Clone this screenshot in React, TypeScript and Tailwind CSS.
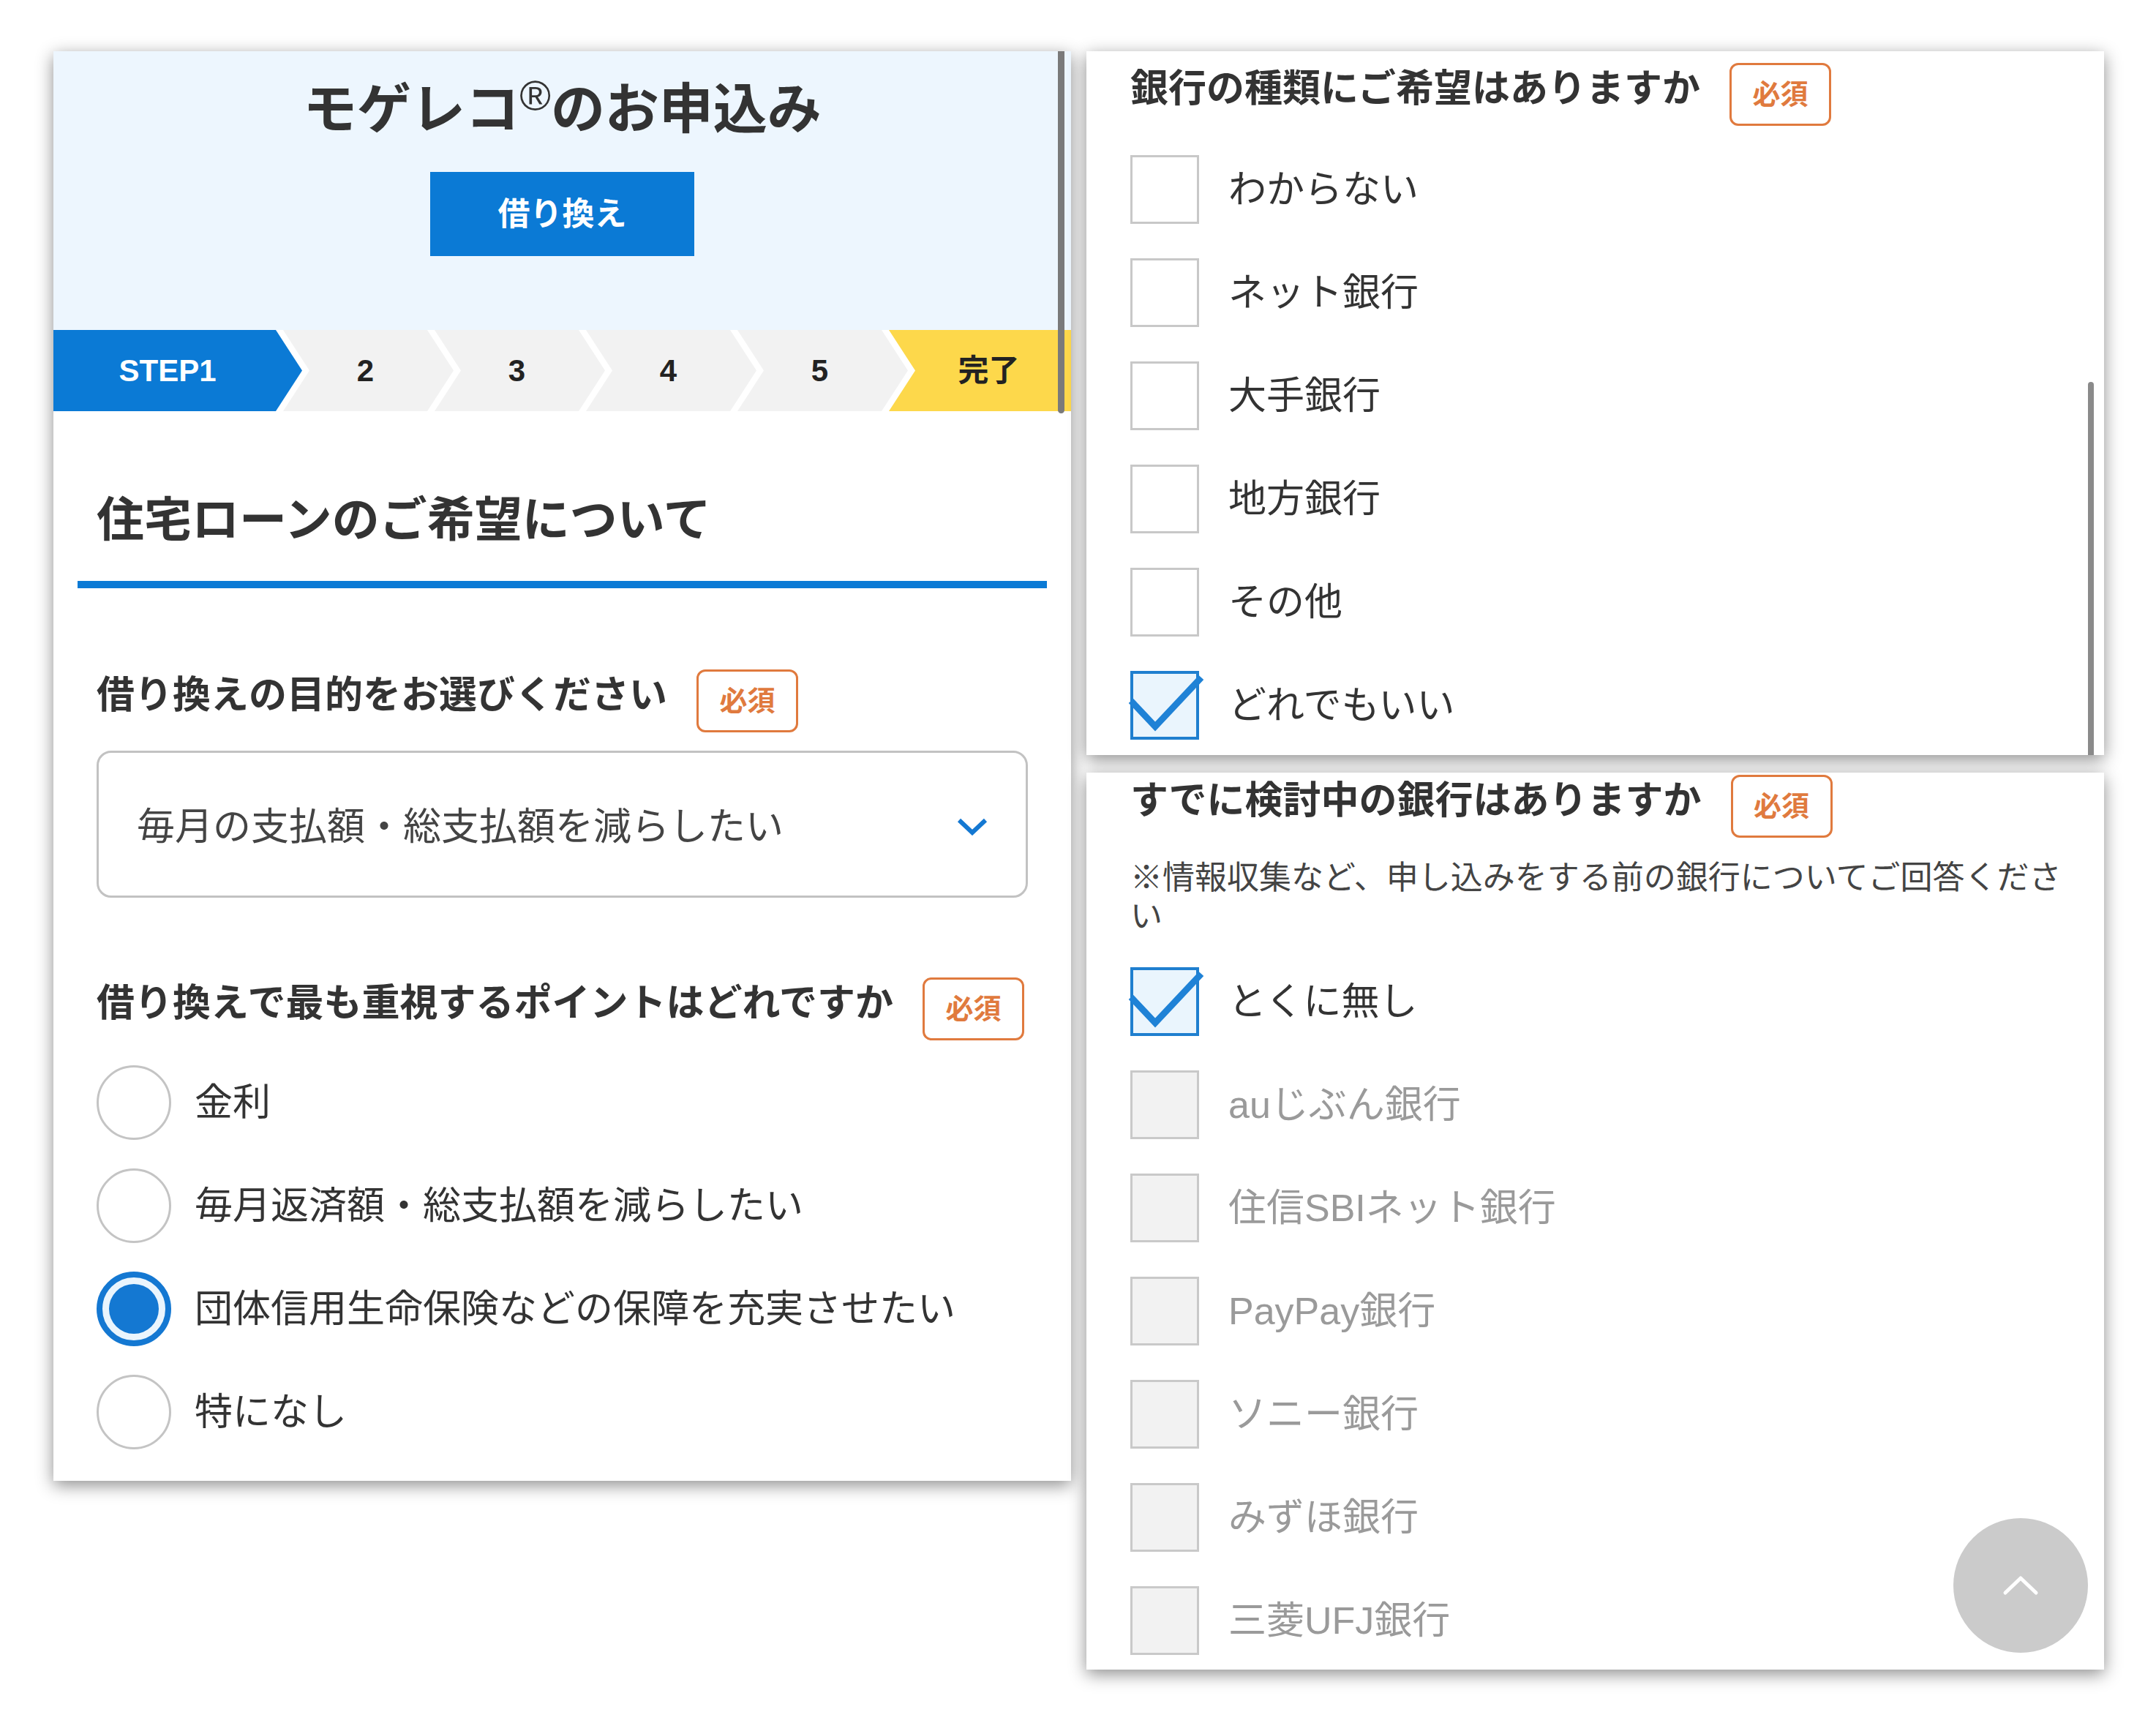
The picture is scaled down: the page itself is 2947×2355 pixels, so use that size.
import React from "react";

const blue = "bg-[#0b7ad5]";

function Badge() {
    return (
        <span className="ml-[40px] flex h-[86px] w-[139px] shrink-0 items-center justify-center rounded-[12px] border-[3px] border-[#e07a3e] text-[38px] font-bold leading-none text-[#e07a3e]">
            必須
        </span>
    );
}

function Question({ children }: { children: React.ReactNode }) {
    return (
        <div className="flex items-start">
            <h3 className="whitespace-nowrap text-[52px] font-bold leading-[70px] text-[#333]">{children}</h3>
            <Badge />
        </div>
    );
}

function Radio({ label, checked }: { label: string; checked?: boolean }) {
    return (
        <div className="flex h-[141px] items-center">
            {checked ? (
                <span className="flex h-[102px] w-[102px] shrink-0 items-center justify-center rounded-full border-[8px] border-[#1478d2] bg-[#eaf5fd]">
                    <span className="h-[68px] w-[68px] rounded-full bg-[#1478d2]" />
                </span>
            ) : (
                <span className="h-[102px] w-[102px] shrink-0 rounded-full border-[3px] border-[#c4c4c4] bg-white" />
            )}
            <span className="ml-[32px] text-[52px] leading-none text-[#333]">{label}</span>
        </div>
    );
}

function Check({ label, checked, disabled }: { label: string; checked?: boolean; disabled?: boolean }) {
    let box = "border-[3px] border-[#c8c8c8] bg-white";
    if (checked) box = "border-[4px] border-[#1f7fcf] bg-[#eaf5fd]";
    if (disabled) box = "border-[3px] border-[#c9c9c9] bg-[#f2f2f2]";
    return (
        <div className="flex h-[141px] items-center">
            <span className={`relative h-[94px] w-[94px] shrink-0 ${box}`}>
                {checked && (
                    <svg viewBox="0 0 94 94" className="absolute left-[-4px] top-[-4px] h-[94px] w-[94px] overflow-visible">
                        <polyline points="1,41 34,76 97,9" fill="none" stroke="#1f82d6" strokeWidth="9" />
                    </svg>
                )}
            </span>
            <span className={`ml-[40px] text-[52px] leading-none ${disabled ? "text-[#9a9a9a]" : "text-[#333]"}`}>{label}</span>
        </div>
    );
}

function StepBar() {
    return (
        <div className="flex h-[111px] bg-white">
            <div className={`flex w-[340px] shrink-0 items-center justify-center pl-[8px] pr-[36px] ${blue} [clip-path:polygon(0_0,304px_0,340px_50%,304px_100%,0_100%)]`}>
                <span className="font-['Liberation_Sans',sans-serif] text-[42px] font-bold text-white">STEP1</span>
            </div>
            {["2", "3", "4", "5"].map((n) => (
                <div
                    key={n}
                    className="-ml-[26px] flex w-[233px] shrink-0 items-center justify-center bg-[#f2f2f2] pr-[8px] [clip-path:polygon(0_0,197px_0,233px_50%,197px_100%,0_100%,36px_50%)]"
                >
                    <span className="font-['Liberation_Sans',sans-serif] text-[42px] font-bold text-[#222]">{n}</span>
                </div>
            ))}
            <div className="-ml-[26px] flex flex-1 items-center justify-center bg-[#fdd84b] pl-[24px] [clip-path:polygon(0_0,100%_0,100%_100%,0_100%,36px_50%)]">
                <span className="text-[42px] font-bold text-[#222]">完了</span>
            </div>
        </div>
    );
}

export default function App() {
    const panel = "relative w-[1391px] shrink-0 overflow-hidden bg-white shadow-[0_6px_22px_rgba(0,0,0,0.45)]";

    return (
        <div className="flex h-[2355px] w-[2947px] items-start gap-[21px] bg-white pl-[73px] pt-[70px] font-['Liberation_Sans','Noto_Sans_CJK_JP',sans-serif]">
            {/* left: step 1 form */}
            <div className={`${panel} h-[1954px]`}>
                <div className="flex h-[381px] flex-col items-center bg-[#edf6fe] pt-[35px]">
                    <h1 className="text-[74px] font-bold leading-[90px] text-[#333]">
                        モゲレコ<span className="align-top text-[58px] font-normal leading-[52px]">®</span>のお申込み
                    </h1>
                    <div className={`mt-[40px] flex h-[115px] w-[361px] items-center justify-center ${blue} text-[44px] font-bold text-white`}>
                        借り換え
                    </div>
                </div>
                <StepBar />

                <div className="px-[33px]">
                    <h2 className="mt-[109px] pl-[26px] text-[65px] font-bold leading-[80px] text-[#333]">住宅ローンのご希望について</h2>
                    <div className={`mt-[43px] h-[10px] ${blue}`} />
                </div>

                <div className="px-[59px]">
                    <div className="mt-[111px]">
                        <Question>借り換えの目的をお選びください</Question>
                    </div>
                    <div className="mt-[25px] flex h-[201px] items-center justify-between rounded-[20px] border-[3px] border-[#c2c2c2] pl-[52px] pr-[52px] pt-[6px]">
                        <span className="text-[52px] leading-none text-[#444]">毎月の支払額・総支払額を減らしたい</span>
                        <svg viewBox="0 0 42 24" className="h-[24px] w-[42px]">
                            <polyline points="3,3 21,20 39,3" fill="none" stroke="#1478d2" strokeWidth="6" />
                        </svg>
                    </div>

                    <div className="mt-[109px]">
                        <Question>借り換えで最も重視するポイントはどれですか</Question>
                    </div>
                    <div className="mt-[14px]">
                        <Radio label="金利" />
                        <Radio label="毎月返済額・総支払額を減らしたい" />
                        <Radio label="団体信用生命保険などの保障を充実させたい" checked />
                        <Radio label="特になし" />
                    </div>
                </div>

                <div className="absolute right-[9px] top-0 h-[495px] w-[9px] rounded-b-full bg-[#7a7a7a]" />
            </div>

            {/* right column */}
            <div className="flex flex-col gap-[24px]">
                <div className={`${panel} h-[962px] pl-[60px] pt-[16px]`}>
                    <Question>銀行の種類にご希望はありますか</Question>
                    <div className="mt-[16px]">
                        <Check label="わからない" />
                        <Check label="ネット銀行" />
                        <Check label="大手銀行" />
                        <Check label="地方銀行" />
                        <Check label="その他" />
                        <Check label="どれでもいい" checked />
                    </div>
                    <div className="absolute left-[1369px] top-[452px] h-[520px] w-[8px] rounded-full bg-[#8a8a8a]" />
                </div>

                <div className={`${panel} h-[1226px] pl-[60px] pr-[60px] pt-[3px]`}>
                    <Question>すでに検討中の銀行はありますか</Question>
                    <p className="-mr-[40px] mt-[28px] whitespace-nowrap text-[44px] leading-[53px] text-[#444]">
                        ※情報収集など、申し込みをする前の銀行についてご回答くださ
                        <br />い
                    </p>
                    <div className="mt-[19px]">
                        <Check label="とくに無し" checked />
                        <Check label="auじぶん銀行" disabled />
                        <Check label="住信SBIネット銀行" disabled />
                        <Check label="PayPay銀行" disabled />
                        <Check label="ソニー銀行" disabled />
                        <Check label="みずほ銀行" disabled />
                        <Check label="三菱UFJ銀行" disabled />
                    </div>
                    <div className="absolute left-[1185px] top-[1019px] flex h-[184px] w-[184px] items-center justify-center rounded-full bg-[#cbcbcb]">
                        <svg viewBox="0 0 50 28" className="h-[28px] w-[50px]">
                            <polyline points="4,24 25,4 46,24" fill="none" stroke="#fff" strokeWidth="5" strokeLinecap="round" strokeLinejoin="round" />
                        </svg>
                    </div>
                </div>
            </div>
        </div>
    );
}
